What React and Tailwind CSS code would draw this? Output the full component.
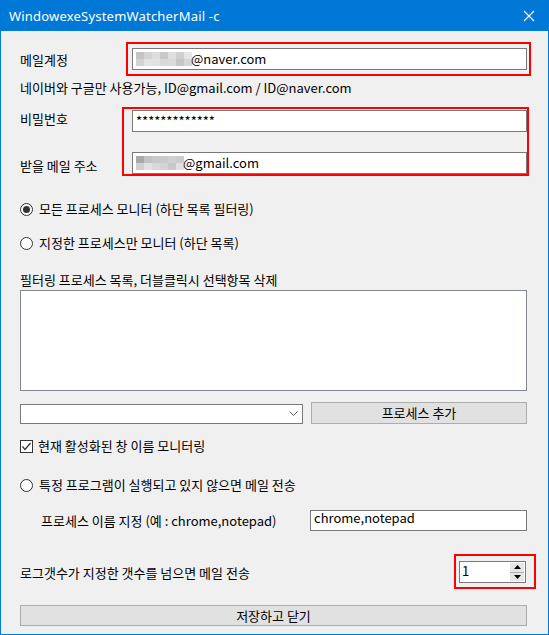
import React from 'react';

const font = { fontFamily: '"Noto Sans CJK KR", "Noto Sans", sans-serif' };

const blur1 = [
  ['#c4c4c4', '#d4d4d4', '#dedede', '#c8c8c8', '#e0e0e0', '#cfcfcf', '#e6e6e6'],
  ['#d2d2d2', '#e4e4e4', '#e2e2e2', '#d9d9d9', '#dadada', '#c6c6c6', '#d6d6d6'],
];
const blur2 = [
  ['#a9a9a9', '#c2c2c2', '#c8c8c8', '#cbcbcb', '#d0d0d0', '#cccccc'],
  ['#d0d0d0', '#e2e2e2', '#d8d8d8', '#d4d4d4', '#c9c9c9', '#e0e0e0'],
];

const Mosaic = ({ cells }) => (
  <div className="flex flex-col">
    {cells.map((row, i) => (
      <div key={i} className="flex">
        {row.map((c, j) => (
          <div key={j} className="w-[8px] h-[7px]" style={{ backgroundColor: c }} />
        ))}
      </div>
    ))}
  </div>
);

const TextBox = ({ children, className = '' }) => (
  <div className={`h-[22px] bg-white border border-[#7a7a7a] flex items-center pl-[3px] text-[13px] text-black ${className}`}>
    {children}
  </div>
);

const Radio = ({ checked }) => (
  <div className="w-[13px] h-[13px] rounded-full border border-[#333333] bg-white flex items-center justify-center shrink-0">
    {checked && <div className="w-[7px] h-[7px] rounded-full bg-[#333333]" />}
  </div>
);

const Button = ({ children, className = '' }) => (
  <div className={`bg-[#e1e1e1] border border-[#adadad] flex items-center justify-center text-[13px] text-black ${className}`}>
    {children}
  </div>
);

export default function App() {
  return (
    <div className="w-[549px] h-[635px] bg-[#f0f0f0] border-x border-b border-[#0078d7] flex flex-col text-[13px] text-black leading-[14px]" style={font}>
      {/* Title bar */}
      <div className="h-[31px] -mx-px bg-[#0078d7] flex items-center justify-between pl-[9px] pr-[10px] shrink-0">
        <span className="text-white text-[13px] tracking-[0.2px]" style={{ fontFamily: '"Noto Sans", sans-serif' }}>
          WindowexeSystemWatcherMail -c
        </span>
        <svg width="12" height="12" viewBox="0 0 12 12" className="mr-[4px]">
          <path d="M1 1 L11 11 M11 1 L1 11" stroke="#ffffff" strokeWidth="1.2" />
        </svg>
      </div>

      <div className="flex flex-col pl-[19px] pr-[21px]">
        {/* Mail account */}
        <div className="flex items-center mt-[11px]">
          <div className="w-[106px] pt-[1px]">메일계정</div>
          <div className="flex-1 -mr-[4px] border-2 border-[#ff0000] pl-[4px] pr-[2px] py-[4px]">
            <TextBox>
              <Mosaic cells={blur1} />
              <span className="-ml-px">@naver.com</span>
            </TextBox>
          </div>
        </div>

        <div className="mt-[5px]">네이버와 구글만 사용가능, ID@gmail.com / ID@naver.com</div>

        {/* Password / receive mail */}
        <div className="flex mt-[12px]">
          <div className="w-[102px] flex flex-col pt-[5px]">
            <div>비밀번호</div>
            <div className="mt-[33px]">받을 메일 주소</div>
          </div>
          <div className="flex-1 -mr-[2px] border-2 border-[#ff0000] pl-[8px] pt-[1px] flex flex-col gap-[20px]">
            <TextBox>*************</TextBox>
            <TextBox>
              <Mosaic cells={blur2} />
              <span className="-ml-px">@gmail.com</span>
            </TextBox>
          </div>
        </div>

        {/* Radios */}
        <div className="flex items-center gap-[6px] mt-[26px]">
          <Radio checked />
          <span>모든 프로세스 모니터 (하단 목록 필터링)</span>
        </div>
        <div className="flex items-center gap-[6px] mt-[20px]">
          <Radio />
          <span>지정한 프로세스만 모니터 (하단 목록)</span>
        </div>

        <div className="mt-[23px]">필터링 프로세스 목록, 더블클릭시 선택항목 삭제</div>

        {/* List box */}
        <div className="mt-[3px] h-[101px] bg-white border border-[#828790]" />

        {/* Combo + add */}
        <div className="flex items-end mt-[11px]">
          <div className="w-[283px] h-[20px] bg-white border border-[#7a7a7a] flex items-center justify-end pr-[4px]">
            <svg width="9" height="6" viewBox="0 0 9 6">
              <path d="M0.5 0.5 L4.5 4.5 L8.5 0.5" stroke="#606060" strokeWidth="1" fill="none" />
            </svg>
          </div>
          <Button className="ml-[8px] flex-1 h-[22px]">프로세스 추가</Button>
        </div>

        {/* Checkbox */}
        <div className="flex items-center gap-[5px] mt-[15px]">
          <div className="w-[13px] h-[13px] border border-[#333333] bg-white flex items-center justify-center shrink-0">
            <svg width="11" height="11" viewBox="0 0 11 11">
              <path d="M1.5 5.5 L4 8.5 L9.5 2" stroke="#333333" strokeWidth="1.2" fill="none" />
            </svg>
          </div>
          <span>현재 활성화된 창 이름 모니터링</span>
        </div>

        {/* Radio 3 */}
        <div className="flex items-center gap-[6px] mt-[25px]">
          <Radio />
          <span>특정 프로그램이 실행되고 있지 않으면 메일 전송</span>
        </div>

        {/* Process name */}
        <div className="flex items-center mt-[18px]">
          <div className="w-[290px] pl-[21px]">프로세스 이름 지정 (예 : chrome,notepad)</div>
          <TextBox className="flex-1 !h-[21px] !items-start">chrome,notepad</TextBox>
        </div>

        {/* Log count */}
        <div className="flex items-center justify-between mt-[23px]">
          <div className="pt-[3px]">로그갯수가 지정한 갯수를 넘으면 메일 전송</div>
          <div className="-mr-[9px] border-2 border-[#ff0000] pl-[3px] pr-[8px] pt-[5px] pb-[4px]">
            <div className="w-[67px] h-[22px] bg-white border border-[#7a7a7a] flex">
              <div className="flex-1 pl-[2px] text-[13px] leading-[18px]">1</div>
              <div className="w-[14px] my-[1px] mr-[1px] flex flex-col">
                <div className="flex-1 bg-[#e6e6e6] flex items-center justify-center border-b border-[#b0b0b0]">
                  <svg width="7" height="4" viewBox="0 0 7 4"><path d="M0 4 L3.5 0 L7 4 Z" fill="#000" /></svg>
                </div>
                <div className="flex-1 bg-[#e6e6e6] flex items-center justify-center">
                  <svg width="7" height="4" viewBox="0 0 7 4"><path d="M0 0 L7 0 L3.5 4 Z" fill="#000" /></svg>
                </div>
              </div>
            </div>
          </div>
        </div>

        {/* Save */}
        <Button className="mt-[16px] h-[21px]">저장하고 닫기</Button>
      </div>
    </div>
  );
}
